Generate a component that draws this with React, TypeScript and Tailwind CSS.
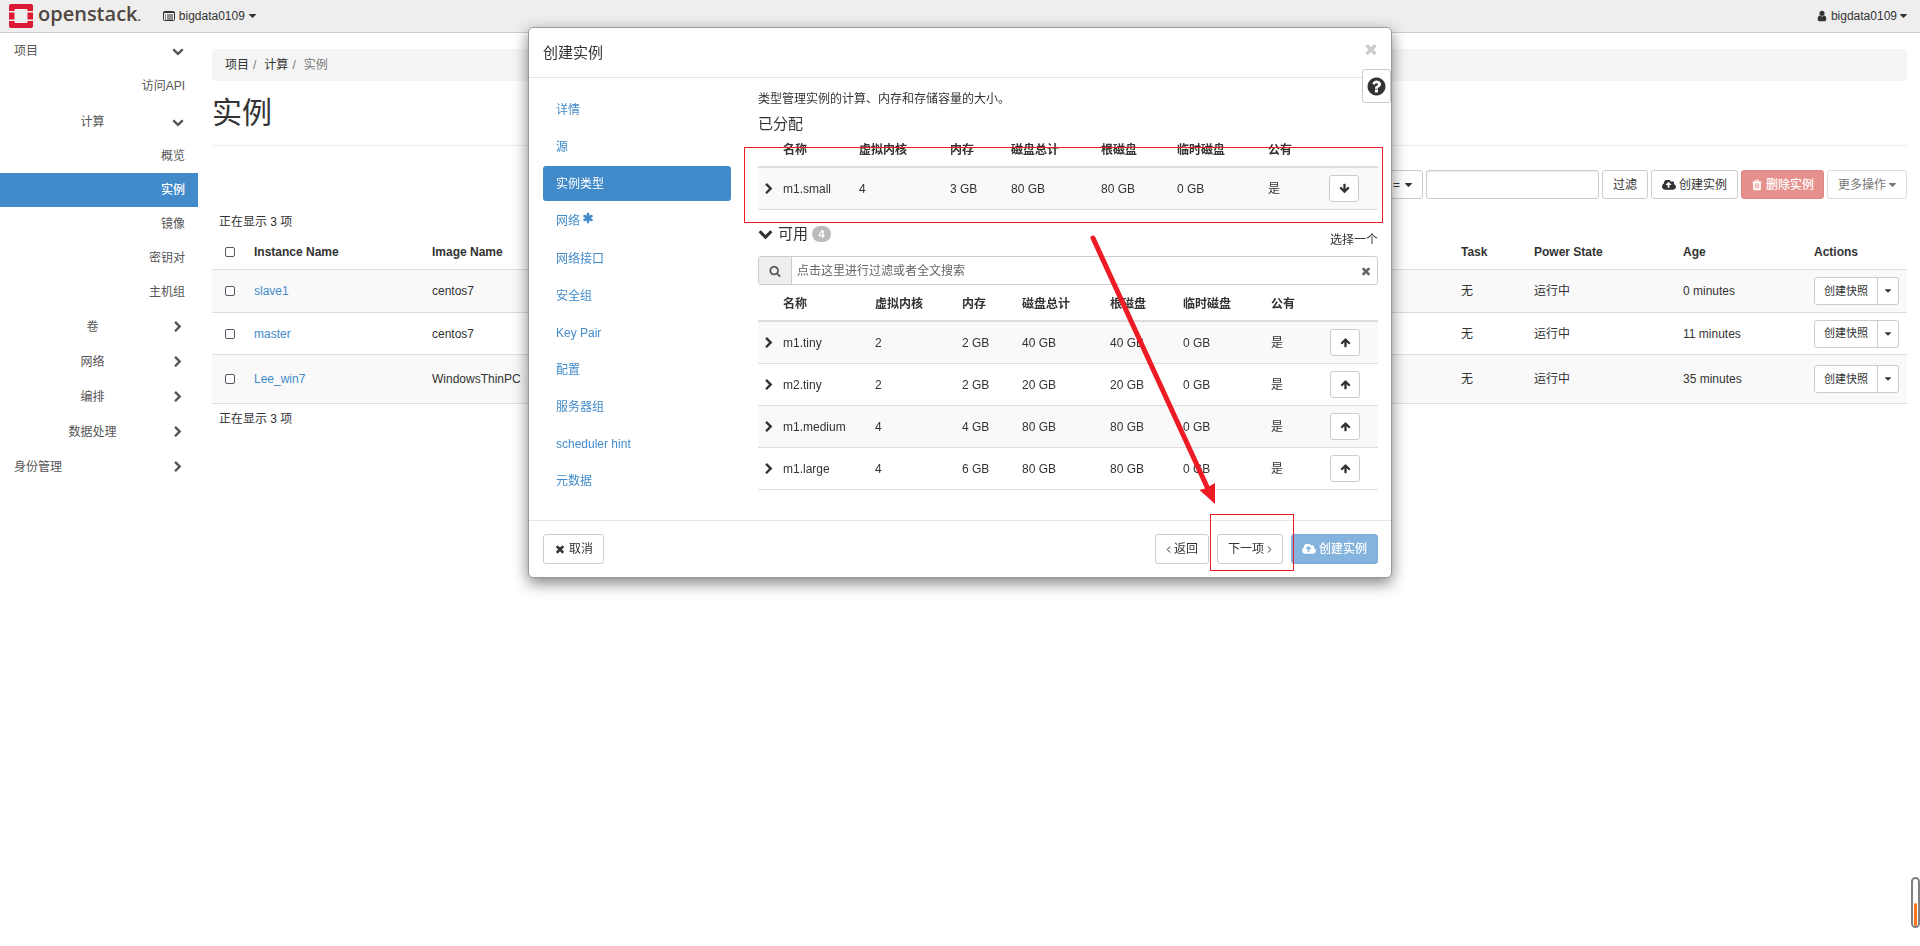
import { useState } from "react";
import clsx from "clsx";

// Font Awesome 4 outlines, drawn on a 1792 unit grid
const ICONS = {
  times:
    "M1490 1322q0 40-28 68l-136 136q-28 28-68 28t-68-28l-294-294-294 294q-28 28-68 28t-68-28l-136-136q-28-28-28-68t28-68l294-294-294-294q-28-28-28-68t28-68l136-136q28-28 68-28t68 28l294 294 294-294q28-28 68-28t68 28l136 136q28 28 28 68t-28 68l-294 294 294 294q28 28 28 68z",
  chevronRight:
    "M1363 877l-742 742q-19 19-45 19t-45-19l-166-166q-19-19-19-45t19-45l531-531-531-531q-19-19-19-45t19-45l166-166q19-19 45-19t45 19l742 742q19 19 19 45t-19 45z",
  chevronDown:
    "M1683 808l-742 741q-19 19-45 19t-45-19l-742-741q-19-19-19-45.5t19-45.5l166-165q19-19 45-19t45 19l531 531 531-531q19-19 45-19t45 19l166 165q19 19 19 45.5t-19 45.5z",
  arrowDown:
    "M1675 832q0 53-37 90l-651 652q-39 37-91 37-53 0-90-37l-651-652q-38-36-38-90 0-53 38-91l74-75q39-37 91-37 53 0 90 37l294 294v-704q0-52 38-90t90-38h128q52 0 90 38t38 90v704l294-294q37-37 90-37 52 0 91 37l75 75q37 39 37 91z",
  arrowUp:
    "M1675 971q0 51-37 90l-75 75q-38 38-91 38-54 0-90-38l-294-293v704q0 52-37.5 84.5t-90.5 32.5h-128q-53 0-90.5-32.5t-37.5-84.5v-704l-294 293q-36 38-90 38t-90-38l-75-75q-38-38-38-90 0-53 38-91l651-651q35-37 90-37 54 0 91 37l651 651q37 39 37 91z",
  search:
    "M1216 832q0-185-131.5-316.5t-316.5-131.5-316.5 131.5-131.5 316.5 131.5 316.5 316.5 131.5 316.5-131.5 131.5-316.5zm512 832q0 52-38 90t-90 38q-54 0-90-38l-343-342q-179 124-399 124-143 0-273.5-55.5t-225-150-150-225-55.5-273.5 55.5-273.5 150-225 225-150 273.5-55.5 273.5 55.5 225 150 150 225 55.5 273.5q0 220-124 399l343 343q37 37 37 90z",
  asterisk:
    "M1546 1050q46 26 59.5 77.5t-12.5 97.5l-64 110q-26 46-77.5 59.5t-97.5-12.5l-266-153v307q0 52-38 90t-90 38h-128q-52 0-90-38t-38-90v-307l-266 153q-46 26-97.5 12.5t-77.5-59.5l-64-110q-26-46-12.5-97.5t59.5-77.5l266-154-266-154q-46-26-59.5-77.5t12.5-97.5l64-110q26-46 77.5-59.5t97.5 12.5l266 153v-307q0-52 38-90t90-38h128q52 0 90 38t38 90v307l266-153q46-26 97.5-12.5t77.5 59.5l64 110q26 46 12.5 97.5t-59.5 77.5l-266 154z",
  question:
    "M1024 1376v-192q0-14-9-23t-23-9h-192q-14 0-23 9t-9 23v192q0 14 9 23t23 9h192q14 0 23-9t9-23zm256-672q0-88-55.5-163t-138.5-116-170-41q-243 0-371 213-15 24 8 42l132 100q7 6 19 6 16 0 25-12 53-68 86-92 34-24 86-24 48 0 85.5 26t37.5 59q0 38-20 61t-68 45q-63 28-115.5 86.5t-52.5 125.5v36q0 14 9 23t23 9h192q14 0 23-9t9-23q0-19 21.5-49.5t54.5-49.5q32-18 49-28.5t46-35 44.5-48 28-60.5 12.5-81zm384 192q0 209-103 385.5t-279.5 279.5-385.5 103-385.5-103-279.5-279.5-103-385.5 103-385.5 279.5-279.5 385.5-103 385.5 103 279.5 279.5 103 385.5z",
  user:
    "M1536 1399q0 109-62.5 187t-150.5 78h-854q-88 0-150.5-78t-62.5-187q0-85 8.5-160.5t31.5-152 58.5-131 94-89 134.5-34.5q131 128 313 128t313-128q76 0 134.5 34.5t94 89 58.5 131 31.5 152 8.5 160.5zm-256-887q0 159-112.5 271.5t-271.5 112.5-271.5-112.5-112.5-271.5 112.5-271.5 271.5-112.5 271.5 112.5 112.5 271.5z",
  trash:
    "M704 1376v-704q0-14-9-23t-23-9h-64q-14 0-23 9t-9 23v704q0 14 9 23t23 9h64q14 0 23-9t9-23zm256 0v-704q0-14-9-23t-23-9h-64q-14 0-23 9t-9 23v704q0 14 9 23t23 9h64q14 0 23-9t9-23zm256 0v-704q0-14-9-23t-23-9h-64q-14 0-23 9t-9 23v704q0 14 9 23t23 9h64q14 0 23-9t9-23zm-544-992h448l-48-117q-7-9-17-11h-317q-10 2-17 11zm928 32v64q0 14-9 23t-23 9h-96v948q0 83-47 143.5t-113 60.5h-832q-66 0-113-58.5t-47-141.5v-952h-96q-14 0-23-9t-9-23v-64q0-14 9-23t23-9h309l70-167q15-37 54-63t79-26h320q40 0 79 26t54 63l70 167h309q14 0 23 9t9 23z",
};

function Icon({ name, className = "size-3" }: { name: keyof typeof ICONS; className?: string }) {
  return (
    <svg viewBox="0 0 1792 1792" fill="currentColor" aria-hidden="true" className={clsx("shrink-0", className)}>
      <path d={ICONS[name]} />
    </svg>
  );
}

function Caret({ className = "w-[7px]" }: { className?: string }) {
  return (
    <svg viewBox="384 640 1024 576" fill="currentColor" aria-hidden="true" className={clsx("h-1 shrink-0", className)}>
      <path d="M1408 704q0 26-19 45l-448 448q-19 19-45 19t-45-19l-448-448q-19-19-19-45t19-45 45-19h896q26 0 45 19t19 45z" />
    </svg>
  );
}

function CloudUpload() {
  return (
    <svg viewBox="-64 256 1920 1280" fill="currentColor" aria-hidden="true" className="h-[10px] w-[14px] shrink-0">
      <path d="M1216 864q0-14-9-23l-352-352q-9-9-23-9t-23 9l-351 351q-10 12-10 24 0 14 9 23t23 9h224v352q0 13 9.500 22.500t22.500 9.500h192q13 0 22.500-9.500t9.500-22.500v-352h224q13 0 22.500-9.500t9.500-22.500zm640 288q0 159-112.500 271.500t-271.500 112.500h-1088q-185 0-316.500-131.500t-131.500-316.500q0-130 70-240t188-165q-2-30-2-43 0-212 150-362t362-150q156 0 285.500 87t188.500 231q71-62 166-62 106 0 181 75t75 181q0 76-41 138 130 31 213.500 135.500t83.500 238.500z" />
    </svg>
  );
}

function Angle({ dir }: { dir: "left" | "right" }) {
  return (
    <svg viewBox="0 0 5 12" fill="none" stroke="currentColor" aria-hidden="true" className="h-3 w-[5px] shrink-0">
      <path d={dir === "left" ? "M4 3.500L1.200 6.500L4 9.500" : "M1 3.500L3.800 6.500L1 9.500"} />
    </svg>
  );
}

const sideNav = [
  { label: "项目", kind: "top", open: true },
  { label: "访问API", kind: "leaf" },
  { label: "计算", kind: "group", open: true },
  { label: "概览", kind: "sub" },
  { label: "实例", kind: "sub", active: true },
  { label: "镜像", kind: "sub" },
  { label: "密钥对", kind: "sub" },
  { label: "主机组", kind: "sub" },
  { label: "卷", kind: "group" },
  { label: "网络", kind: "group" },
  { label: "编排", kind: "group" },
  { label: "数据处理", kind: "group" },
  { label: "身份管理", kind: "top" },
];

const itemHeights: Record<string, string> = {
  top: "h-[35px]",
  leaf: "h-[36px]",
  group: "h-[35px]",
  sub: "h-[34px]",
};

const instances = [
  { name: "slave1", image: "centos7", age: "0 minutes", height: "h-[43px]" },
  { name: "master", image: "centos7", age: "11 minutes", height: "h-[42px]" },
  { name: "Lee_win7", image: "WindowsThinPC", age: "35 minutes", height: "h-[49px]" },
];

const steps = ["详情", "源", "实例类型", "网络", "网络接口", "安全组", "Key Pair", "配置", "服务器组", "scheduler hint", "元数据"];

const flavorHeads = ["名称", "虚拟内核", "内存", "磁盘总计", "根磁盘", "临时磁盘", "公有"];

const allocated = [["m1.small", "4", "3 GB", "80 GB", "80 GB", "0 GB", "是"]];

const available = [
  ["m1.tiny", "2", "2 GB", "40 GB", "40 GB", "0 GB", "是"],
  ["m2.tiny", "2", "2 GB", "20 GB", "20 GB", "0 GB", "是"],
  ["m1.medium", "4", "4 GB", "80 GB", "80 GB", "0 GB", "是"],
  ["m1.large", "4", "6 GB", "80 GB", "80 GB", "0 GB", "是"],
];

const allocatedCols = ["w-[18px]", "w-[76px]", "w-[91px]", "w-[61px]", "w-[90px]", "w-[76px]", "w-[91px]", "w-[61px]", "w-auto"];
const availableCols = ["w-[18px]", "w-[92px]", "w-[87px]", "w-[60px]", "w-[88px]", "w-[73px]", "w-[88px]", "w-[59px]", "w-auto"];

const btn = "flex items-center justify-center gap-[3px] rounded-[3px] border border-[#ccc] bg-white px-[10px]";

function TopBar() {
  return (
    <header className="flex h-[33px] items-center border-b border-[#ccc] bg-[#eee] pr-[13px] pl-[9px]">
      <a href="#" className="flex items-center gap-[5px]">
        <svg viewBox="0 0 24 24" aria-hidden="true" className="size-6">
          <path
            fill="#da1a32"
            d="M2 0h20a2 2 0 0 1 2 2v5h-5.500V6a1 1 0 0 0-1-1h-11a1 1 0 0 0-1 1v1H0V2a2 2 0 0 1 2-2zM0 8.500h5.500v7H0zM18.500 8.500H24v7h-5.500zM0 17h5.500v1a1 1 0 0 0 1 1h11a1 1 0 0 0 1-1v-1H24v5a2 2 0 0 1-2 2H2a2 2 0 0 1-2-2z"
          />
        </svg>
        <span className="pb-1 font-['Open_Sans',sans-serif] text-[20px] leading-6 font-semibold text-[#4f4740]">
          openstack<span className="text-xs">.</span>
        </span>
      </a>
      <button type="button" className="ml-[22px] flex items-center gap-1">
        <svg viewBox="0 0 12 10" fill="none" stroke="currentColor" aria-hidden="true" className="h-[10px] w-3">
          <rect x=".5" y=".5" width="11" height="9" rx="1" />
          <path d="M0 1.500h12M2 4h1M4 4h6M2 6h1M4 6h6M2 8h1M4 8h6" />
        </svg>
        bigdata0109
        <Caret />
      </button>
      <button type="button" className="ml-auto flex items-center gap-[3px]">
        <Icon name="user" />
        bigdata0109
        <Caret />
      </button>
    </header>
  );
}

function Sidebar() {
  return (
    <nav className="w-[198px] shrink-0 text-[#555]">
      {sideNav.map((item) => (
        <a
          key={item.label}
          href="#"
          className={clsx(
            "flex items-center pr-[13px] pl-[14px]",
            itemHeights[item.kind],
            item.active && "bg-[#428bca] font-medium text-white"
          )}
        >
          <span
            className={clsx(
              "flex-1",
              item.kind === "group" && "text-center",
              (item.kind === "leaf" || item.kind === "sub") && "text-right"
            )}
          >
            {item.label}
          </span>
          {(item.kind === "top" || item.kind === "group") && (
            <span className="flex w-[14px] justify-center">
              <Icon name={item.open ? "chevronDown" : "chevronRight"} />
            </span>
          )}
        </a>
      ))}
    </nav>
  );
}

function Toolbar() {
  return (
    <div className="mt-6 flex h-[29px] justify-end gap-[3px]">
      <div className="relative">
        <select
          aria-label="过滤类型"
          className="h-full w-[160px] appearance-none rounded-[3px] border border-[#ccc] bg-white pr-[22px] text-right [text-align-last:right]"
        >
          <option>=</option>
        </select>
        <div className="pointer-events-none absolute inset-y-0 right-[11px] flex items-center">
          <Caret />
        </div>
      </div>
      <input
        type="text"
        aria-label="过滤"
        className="w-[173px] rounded-[3px] border border-[#ccc] px-2 shadow-[inset_0_1px_1px_rgba(0,0,0,0.08)]"
      />
      <button type="button" className={btn}>过滤</button>
      <button type="button" className={btn}>
        <CloudUpload />
        创建实例
      </button>
      <button
        type="button"
        disabled
        className="flex items-center justify-center gap-[3px] rounded-[3px] border border-[#e08683] bg-[#e6908d] px-[9px] font-medium text-white"
      >
        <Icon name="trash" />
        删除实例
      </button>
      <button type="button" disabled className="flex items-center gap-[3px] rounded-[3px] border border-[#ddd] bg-white px-[10px] text-[#777]">
        更多操作
        <Caret />
      </button>
    </div>
  );
}

function Check({ label }: { label: string }) {
  return (
    <input
      type="checkbox"
      aria-label={label}
      className="mx-auto block size-[10px] appearance-none rounded-[2px] border border-[#5b5563] bg-white"
    />
  );
}

function InstanceTable() {
  return (
    <table className="w-full table-fixed border-separate border-spacing-0 text-left">
      <thead>
        <tr className="h-[39px] [&>th]:border-b [&>th]:border-[#ddd] [&>th]:pt-1">
          <th className="w-[35px]"><Check label="全选" /></th>
          <th className="w-[178px] px-[7px]">Instance Name</th>
          <th className="px-[7px]">Image Name</th>
          <th className="w-[73px] px-[7px]">Task</th>
          <th className="w-[149px] px-[7px]">Power State</th>
          <th className="w-[131px] px-[7px]">Age</th>
          <th className="w-[100px] px-[7px]">Actions</th>
        </tr>
      </thead>
      <tbody>
        {instances.map((row) => (
          <tr key={row.name} className={clsx("odd:bg-[#f9f9f9] [&>td]:border-b [&>td]:border-[#ddd]", row.height)}>
            <td><Check label={row.name} /></td>
            <td className="px-[7px]"><a href="#" className="text-[#428bca]">{row.name}</a></td>
            <td className="px-[7px]">{row.image}</td>
            <td className="px-[7px]">无</td>
            <td className="px-[7px]">运行中</td>
            <td className="px-[7px]">{row.age}</td>
            <td className="px-[7px]">
              <div className="flex h-7 w-[85px] rounded-[3px] border border-[#ccc] bg-white text-[11px]">
                <button type="button" className="flex-1">创建快照</button>
                <button type="button" aria-label="更多" className="flex w-[21px] items-center justify-center border-l border-[#ccc]">
                  <Caret className="w-[6px]" />
                </button>
              </div>
            </td>
          </tr>
        ))}
      </tbody>
    </table>
  );
}

function FlavorTable({ rows, cols, action }: { rows: string[][]; cols: string[]; action: "arrowUp" | "arrowDown" }) {
  return (
    <table className="w-full table-fixed border-separate border-spacing-0 text-left">
      <colgroup>
        {cols.map((width, i) => (
          <col key={i} className={width} />
        ))}
      </colgroup>
      <thead>
        <tr className="h-[34px] [&>th]:border-b-2 [&>th]:border-[#ddd]">
          <th />
          {flavorHeads.map((head) => (
            <th key={head} className="px-[7px] whitespace-nowrap">{head}</th>
          ))}
          <th />
        </tr>
      </thead>
      <tbody>
        {rows.map((row) => (
          <tr key={row[0]} className="h-[42px] odd:bg-[#f9f9f9] [&>td]:border-b [&>td]:border-[#ddd]">
            <td>
              <button type="button" aria-label="展开" className="ml-[5px] block"><Icon name="chevronRight" /></button>
            </td>
            {row.map((cell, i) => (
              <td key={i} className="px-[7px]">{cell}</td>
            ))}
            <td className="px-[7px]">
              <button
                type="button"
                aria-label={action === "arrowUp" ? "分配" : "移除"}
                className="flex h-[27px] w-[30px] items-center justify-center rounded-[3px] border border-[#ccc] bg-white"
              >
                <Icon name={action} className="size-[11px]" />
              </button>
            </td>
          </tr>
        ))}
      </tbody>
    </table>
  );
}

// Red boxes and arrow that point out the flavor row and the next button
function Annotations() {
  return (
    <div className="pointer-events-none">
      <div className="absolute top-[119px] left-[215px] h-[76px] w-[639px] border border-[#ed1c24]" />
      <div className="absolute top-[486px] left-[681px] h-[57px] w-[84px] border border-[#ed1c24]" />
      <svg viewBox="0 0 128 272" aria-hidden="true" className="absolute top-[206px] left-[561px] h-[272px] w-[128px]">
        <path d="M3 4L118 255" stroke="#ed1c24" strokeWidth="5" strokeLinecap="round" />
        <path d="M125 270L109.500 256L115 254.500L119 252.500L125 249z" fill="#ed1c24" />
      </svg>
    </div>
  );
}

function LaunchModal() {
  const [step, setStep] = useState("实例类型");
  const [query, setQuery] = useState("");

  return (
    <div
      role="dialog"
      aria-labelledby="launch-title"
      className="relative w-[864px] max-w-full rounded-[5px] border border-[#999] bg-white shadow-[0_5px_15px_rgba(0,0,0,0.5)]"
    >
      <div className="flex h-[50px] items-center justify-between border-b border-[#e5e5e5] pr-3 pl-[14px]">
        <h4 id="launch-title" className="text-[15px]">创建实例</h4>
        <button type="button" aria-label="关闭" className="mb-2 text-[#ccc]"><Icon name="times" className="size-4" /></button>
      </div>
      <button
        type="button"
        aria-label="帮助"
        className="absolute top-[41px] right-0 flex h-[34px] w-[29px] items-center justify-center rounded-[3px] border border-[#ccc] bg-white"
      >
        <Icon name="question" className="size-[21px]" />
      </button>

      <div className="flex pr-[13px] pb-[22px] pl-[14px]">
        <div className="flex w-[188px] flex-col gap-[2px] pt-[14px]">
          {steps.map((label) => (
            <button
              key={label}
              type="button"
              onClick={() => setStep(label)}
              className={clsx(
                "flex items-center rounded-[3px] px-[13px]",
                label === "网络" ? "h-[36px]" : "h-[35px]",
                step === label ? "bg-[#428bca] text-white" : "text-[#428bca]"
              )}
            >
              {label}
              {label === "网络" && <Icon name="asterisk" className="mb-[6px] ml-[2px] size-3" />}
            </button>
          ))}
        </div>

        <div className="ml-[27px] min-w-0 flex-1">
          <p className="pt-[13px] leading-[17px]">类型管理实例的计算、内存和存储容量的大小。</p>
          <h5 className="pt-[6px] text-[15px] leading-5">已分配</h5>
          <FlavorTable rows={allocated} cols={allocatedCols} action="arrowDown" />

          <div className="flex h-[46px] items-center justify-between pt-[2px]">
            <div className="flex items-center text-[15px]">
              <Icon name="chevronDown" className="size-[15px]" />
              <span className="ml-[5px]">可用</span>
              <span className="ml-[4px] flex h-4 w-[19px] items-center justify-center rounded-full bg-[#bbb] text-[11px] font-bold text-white">
                4
              </span>
            </div>
            <span className="pt-3">选择一个</span>
          </div>

          <div className="mb-[3px] flex h-[29px] items-stretch overflow-hidden rounded-[3px] border border-[#ccc]">
            <span className="flex w-[33px] items-center justify-center border-r border-[#ccc] bg-[#eee] text-[#555]">
              <Icon name="search" />
            </span>
            <input
              type="text"
              value={query}
              onChange={(e) => setQuery(e.target.value)}
              aria-label="搜索"
              placeholder="点击这里进行过滤或者全文搜索"
              className="min-w-0 flex-1 px-[5px] outline-none placeholder:text-[#666]"
            />
            <button type="button" aria-label="清除" onClick={() => setQuery("")} className="px-[5px] text-[#666]">
              <Icon name="times" />
            </button>
          </div>
          <FlavorTable rows={available} cols={availableCols} action="arrowUp" />
        </div>
      </div>

      <div className="flex gap-2 border-t border-[#e5e5e5] py-[13px] pr-[13px] pl-[14px]">
        <button type="button" className={clsx(btn, "mr-auto h-[30px]")}>
          <Icon name="times" />
          取消
        </button>
        <button type="button" className={clsx(btn, "h-[30px]")}>
          <Angle dir="left" />
          返回
        </button>
        <button type="button" className={clsx(btn, "h-[30px]")}>
          下一项
          <Angle dir="right" />
        </button>
        <button
          type="button"
          disabled
          className="flex h-[30px] w-[87px] items-center justify-center gap-[3px] rounded-[3px] border border-[#7badd9] bg-[#84b3dd] font-medium text-white"
        >
          <CloudUpload />
          创建实例
        </button>
      </div>

      <Annotations />
    </div>
  );
}

export default function App() {
  return (
    <div className="min-h-screen bg-white font-['Liberation_Sans','Noto_Sans_CJK_SC',sans-serif] text-xs text-[#333]">
      <TopBar />
      <div className="flex">
        <Sidebar />
        <main className="min-w-0 flex-1 pt-4 pr-[13px] pl-[14px]">
          <ol className="flex h-8 items-center rounded-[4px] bg-[#f5f5f5] px-[13px]">
            <li><a href="#">项目</a></li>
            <li className="pr-2 pl-1 text-[#777]">/</li>
            <li><a href="#">计算</a></li>
            <li className="pr-2 pl-1 text-[#777]">/</li>
            <li className="text-[#777]">实例</li>
          </ol>
          <h1 className="border-b border-[#eee] pt-[14px] pb-[14px] text-[30px] leading-9">实例</h1>
          <Toolbar />
          <p className="px-[7px] pt-[15px] leading-[17px]">正在显示 3 项</p>
          <InstanceTable />
          <p className="px-[7px] pt-[7px] leading-[17px]">正在显示 3 项</p>
        </main>
      </div>

      <div className="fixed inset-x-0 top-[27px] flex justify-center">
        <LaunchModal />
      </div>

      {/* Floating scroll gauge */}
      <div className="fixed right-0 bottom-[18px] flex h-[51px] w-[9px] items-end rounded-full border-2 border-[#808080] bg-white px-px">
        <div className="h-[23px] w-full rounded-full bg-[#ff7420]" />
      </div>
    </div>
  );
}
